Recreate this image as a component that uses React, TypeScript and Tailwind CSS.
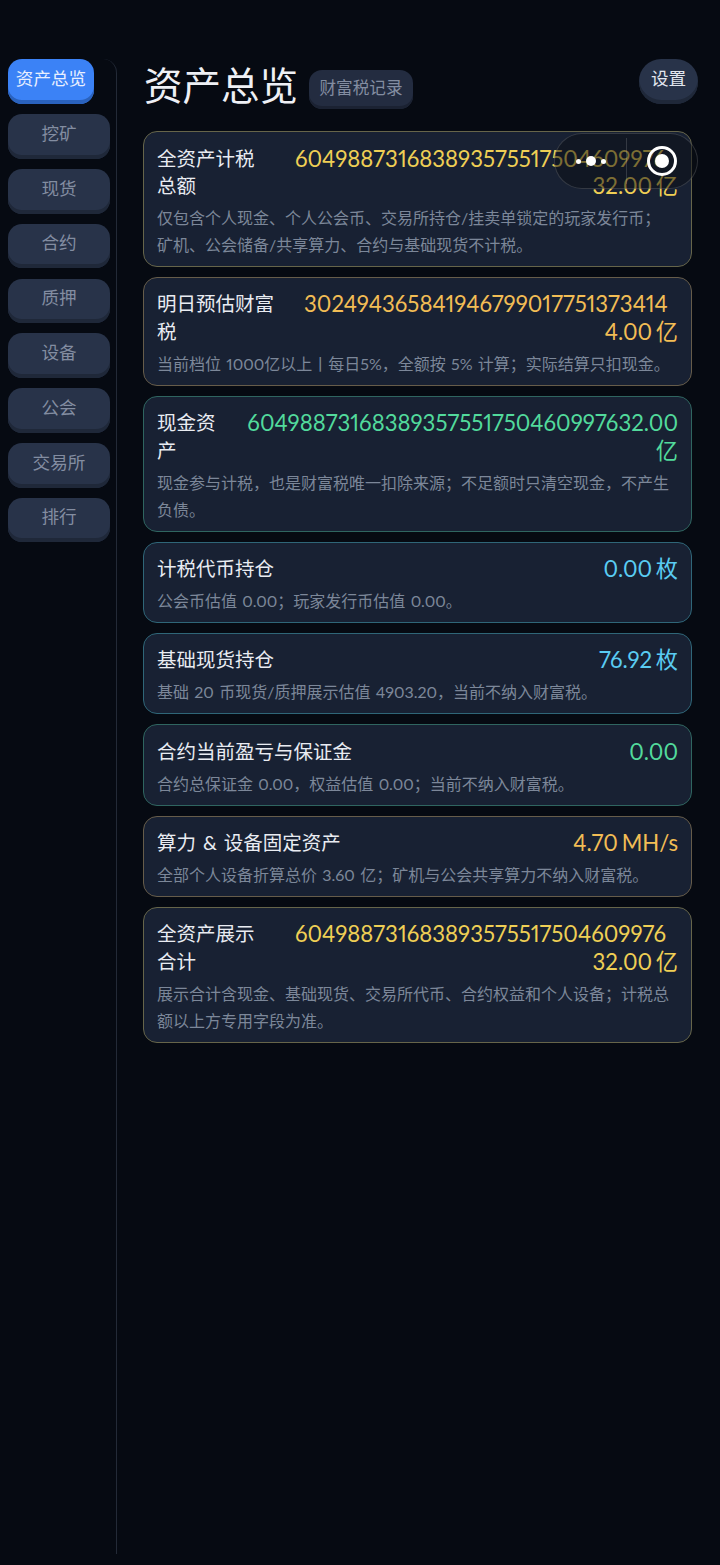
const NAV = ["挖矿", "现货", "合约", "质押", "设备", "公会", "交易所", "排行"];

type Row = {
  title: string[];
  value: string[];
  desc: string[];
  border: string;
  color: string;
  valueWidth: string;
};

const ROWS: Row[] = [
  {
    title: ["全资产计税", "总额"],
    value: ["604988731683893575517504609976", "32.00 亿"],
    desc: ["仅包含个人现金、个人公会币、交易所持仓/挂卖单锁定的玩家发行币；", "矿机、公会储备/共享算力、合约与基础现货不计税。"],
    border: "border-[#66654a]",
    color: "text-[#efcf55]",
    valueWidth: "w-[386px]",
  },
  {
    title: ["明日预估财富", "税"],
    value: ["302494365841946799017751373414", "4.00 亿"],
    desc: ["当前档位 1000亿以上丨每日5%，全额按 5% 计算；实际结算只扣现金。"],
    border: "border-[#665c4a]",
    color: "text-[#f2bd55]",
    valueWidth: "w-[374px]",
  },
  {
    title: ["现金资", "产"],
    value: ["60498873168389357551750460997632.00", "亿"],
    desc: ["现金参与计税，也是财富税唯一扣除来源；不足额时只清空现金，不产生", "负债。"],
    border: "border-[#2f6560]",
    color: "text-[#52da9c]",
    valueWidth: "w-[432px]",
  },
  {
    title: ["计税代币持仓"],
    value: ["0.00 枚"],
    desc: ["公会币估值 0.00；玩家发行币估值 0.00。"],
    border: "border-[#2f6678]",
    color: "text-[#5accf2]",
    valueWidth: "w-auto",
  },
  {
    title: ["基础现货持仓"],
    value: ["76.92 枚"],
    desc: ["基础 20 币现货/质押展示估值 4903.20，当前不纳入财富税。"],
    border: "border-[#2f6678]",
    color: "text-[#5accf2]",
    valueWidth: "w-auto",
  },
  {
    title: ["合约当前盈亏与保证金"],
    value: ["0.00"],
    desc: ["合约总保证金 0.00，权益估值 0.00；当前不纳入财富税。"],
    border: "border-[#2f6560]",
    color: "text-[#52da9c]",
    valueWidth: "w-auto",
  },
  {
    title: ["算力 & 设备固定资产"],
    value: ["4.70 MH/s"],
    desc: ["全部个人设备折算总价 3.60 亿；矿机与公会共享算力不纳入财富税。"],
    border: "border-[#665c4a]",
    color: "text-[#f2bd55]",
    valueWidth: "w-auto",
  },
  {
    title: ["全资产展示", "合计"],
    value: ["604988731683893575517504609976", "32.00 亿"],
    desc: ["展示合计含现金、基础现货、交易所代币、合约权益和个人设备；计税总", "额以上方专用字段为准。"],
    border: "border-[#66654a]",
    color: "text-[#efcf55]",
    valueWidth: "w-[386px]",
  },
];

function AssetCard({ row }: { row: Row }) {
  return (
    <div className={`rounded-[14px] border bg-[#182133] px-[13px] pt-[12.5px] pb-[8px] ${row.border}`}>
      <div className="flex justify-between">
        <div className="shrink-0 whitespace-nowrap text-[19.5px] leading-[27.5px] text-[#e9ecf2] [word-spacing:2px]">
          {row.title.map((line) => (
            <div key={line}>{line}</div>
          ))}
        </div>
        <div className={`whitespace-nowrap text-right text-[22.2px] leading-[27.5px] proportional-nums [word-spacing:-2px] ${row.color} ${row.valueWidth}`}>
          {row.value.map((line, i) => (
            <div key={line} className={row.value.length > 1 && i === 0 && line.length === 30 ? "pr-[12px]" : ""}>
              {line}
            </div>
          ))}
        </div>
      </div>
      <div className="mt-[4.5px] whitespace-nowrap text-[16px] leading-[27px] text-[#7c8799] proportional-nums [word-spacing:1.2px]">
        {row.desc.map((line) => (
          <div key={line}>{line}</div>
        ))}
      </div>
    </div>
  );
}

export default function App() {
  return (
    <div
      className="relative flex h-[1565px] w-[720px] overflow-hidden bg-[#060a12] pt-[59px]"
      style={{ fontFamily: 'Lato, "Noto Sans CJK SC", sans-serif' }}
    >
      {/* left navigation rail */}
      <nav className="mb-[11px] flex w-[117px] shrink-0 flex-col items-start gap-[10.3px] rounded-tr-[14px] border-r border-[#232a37] pl-[8px] pr-[6px]">
        <button className="h-[45px] w-[86px] rounded-[14px] bg-[#3b82f6] pb-[5px] text-[17.6px] text-[#e8efff] shadow-[inset_0_-4px_0_#2a62bd]">
          资产总览
        </button>
        {NAV.map((item) => (
          <button
            key={item}
            className="h-[44.5px] w-[102px] rounded-[14px] bg-[#283349] pb-[5px] text-[17.6px] text-[#838da1] shadow-[inset_0_-4px_0_#1f2839]"
          >
            {item}
          </button>
        ))}
      </nav>

      {/* main column */}
      <main className="ml-[26px] w-[549px] shrink-0">
        <header className="flex h-[72px] items-start">
          <h1 className="ml-[1px] text-[38.5px] font-normal leading-[52px] text-[#eef0f5]">资产总览</h1>
          <button className="ml-[11px] mt-[11px] h-[39px] w-[104px] rounded-[13px] bg-[#232c40] pb-[3px] text-[16.6px] text-[#838da1] shadow-[inset_0_-3px_0_#1b2232]">
            财富税记录
          </button>
          <button className="ml-auto -mr-[6px] h-[45px] w-[59px] rounded-[22px] bg-[#283349] pb-[4px] text-[17.6px] text-[#e2e6ee] shadow-[inset_0_-4px_0_#1f2839]">
            设置
          </button>
        </header>
        <div className="flex flex-col gap-[9.85px]">
          {ROWS.map((row) => (
            <AssetCard key={row.desc[0]} row={row} />
          ))}
        </div>
      </main>

      {/* floating mini-program capsule */}
      <div className="absolute left-[554px] top-[133px] flex h-[56px] w-[144px] items-center rounded-[28px] border border-[#ffffff26] bg-[#0a0d1480]">
        <div className="flex w-[71px] items-center justify-center gap-[5px]">
          <span className="h-[5px] w-[5px] rounded-full bg-white" />
          <span className="h-[10px] w-[10px] rounded-full bg-white" />
          <span className="h-[5px] w-[5px] rounded-full bg-white" />
        </div>
        <div className="h-[46px] w-px bg-[#ffffff26]" />
        <div className="flex flex-1 items-center justify-center">
          <span className="flex h-[30px] w-[30px] items-center justify-center rounded-full border-[3px] border-white">
            <span className="h-[14px] w-[14px] rounded-full bg-white" />
          </span>
        </div>
      </div>
    </div>
  );
}
